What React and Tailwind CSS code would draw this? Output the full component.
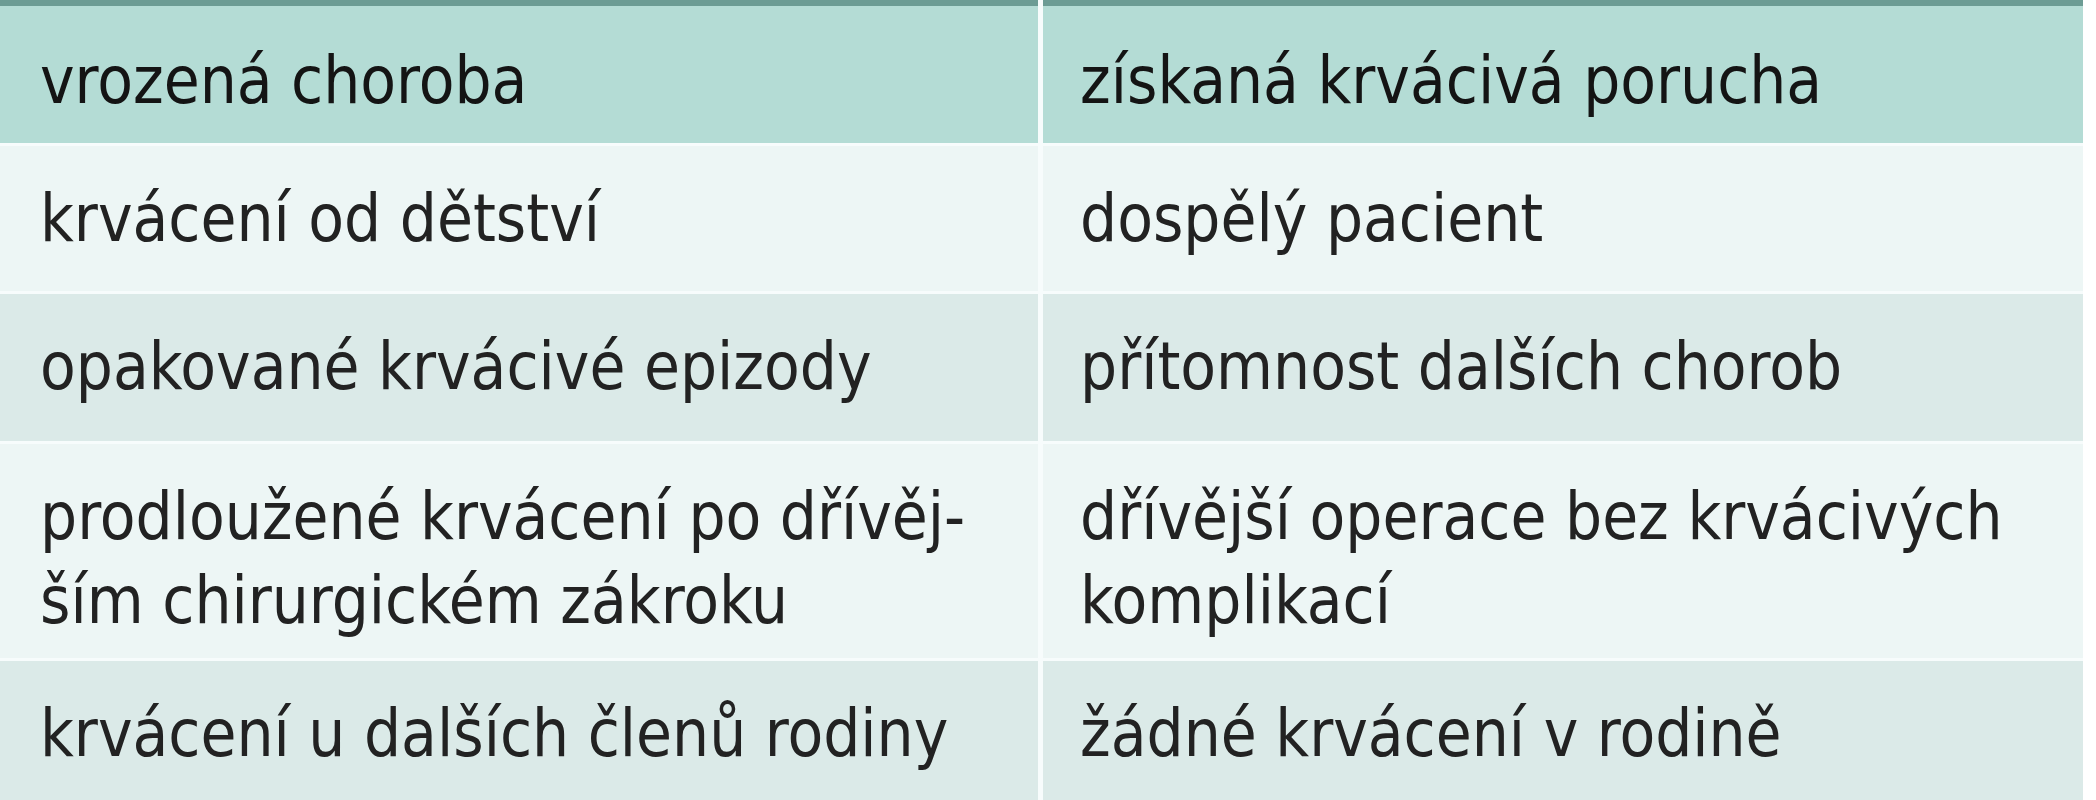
import React from "react";

const rows = [
  { l: ["krvácení od dětství"], r: ["dospělý pacient"], h: "h-[145px]", bg: "bg-[#edf6f5]" },
  { l: ["opakované krvácivé epizody"], r: ["přítomnost dalších chorob"], h: "h-[147px]", bg: "bg-[#dbeae8]" },
  {
    l: ["prodloužené krvácení po dřívěj-", "ším chirurgickém zákroku"],
    r: ["dřívější operace bez krvácivých", "komplikací"],
    h: "h-[214px]",
    bg: "bg-[#edf6f5]",
  },
  { l: ["krvácení u dalších členů rodiny"], r: ["žádné krvácení v rodině"], h: "h-[147px]", bg: "bg-[#dbeae8]" },
];

const font = {
  fontFamily: '"Liberation Sans Narrow", "DejaVu Sans Condensed", "Liberation Sans", sans-serif',
};

function Cell({ lines, pad, h, bg }) {
  return (
    <div className={`${h} ${bg} ${pad} pt-[31px] text-[65px] leading-[84px] text-[#222222]`}>
      {lines.map((t, i) => (
        <div key={i} className="whitespace-nowrap">{t}</div>
      ))}
    </div>
  );
}

export default function App() {
  return (
    <div className="w-[2096px] h-[800px] overflow-hidden bg-white" style={font}>
      <div className="w-[2083px] grid grid-cols-[1038px_1040px] gap-x-[5px] gap-y-[3px] bg-[#f7fcfc]">
        <div className="h-[143px] border-t-[6px] border-[#6c9c94] bg-[#b4dcd5] pl-[40px] pt-[33px] text-[65px] leading-[84px] text-[#141414]">
          vrozená choroba
        </div>
        <div className="h-[143px] border-t-[6px] border-[#6c9c94] bg-[#b4dcd5] pl-[37px] pt-[33px] text-[65px] leading-[84px] text-[#141414]">
          získaná krvácivá porucha
        </div>
        {rows.map((r, i) => (
          <React.Fragment key={i}>
            <Cell lines={r.l} pad="pl-[40px]" h={r.h} bg={r.bg} />
            <Cell lines={r.r} pad="pl-[37px]" h={r.h} bg={r.bg} />
          </React.Fragment>
        ))}
      </div>
    </div>
  );
}
